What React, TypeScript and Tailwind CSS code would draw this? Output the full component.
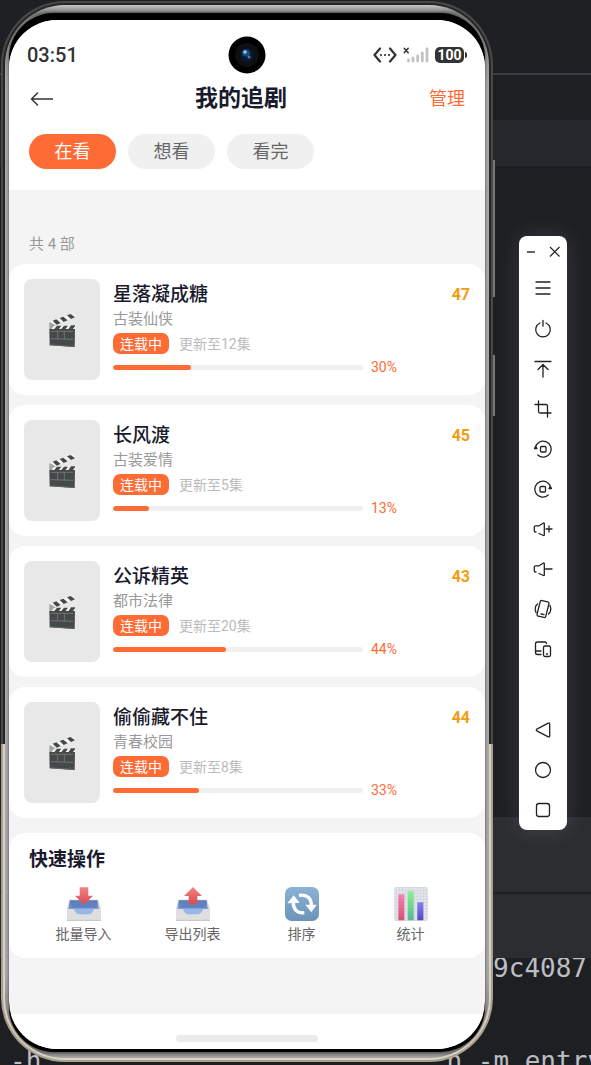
import type { ReactNode } from "react";

const dramas = [
  { title: "星落凝成糖", genre: "古装仙侠", update: "更新至12集", progress: 30, score: 47 },
  { title: "长风渡", genre: "古装爱情", update: "更新至5集", progress: 13, score: 45 },
  { title: "公诉精英", genre: "都市法律", update: "更新至20集", progress: 44, score: 43 },
  { title: "偷偷藏不住", genre: "青春校园", update: "更新至8集", progress: 33, score: 44 },
];

const Clapper = () => (
  <svg viewBox="0 0 78 102" className="w-[26px] h-[34px]" aria-hidden="true">
    <path d="M1 27L74 0l5 13L8 40z" fill="#f4f4f4" />
    <path d="M11 23l11-4 13 11-12 5zM32 15l11-4 13 11-12 5zM54 7l11-4 13 10-12 5z" fill="#454848" />
    <path d="M1 27l9 4 12 9-4 9H1z" fill="#a2a4a4" />
    <path d="M14 39l64-2v13H6z" fill="#f4f4f4" />
    <path d="M24 38h13l-9 12H14zM45 38h12l-9 12H35zM66 37h12v3l-8 10H57z" fill="#454848" />
    <path d="M1 48h77l-1 54-75-5z" fill="#464949" />
    <path d="M5 55h68M5 77l67 2M26 55v22M46 55v23" stroke="#858888" strokeWidth="2" fill="none" />
    <path d="M2 94l75 5v3l-75-5z" fill="#636666" />
  </svg>
);

const Tray = ({ arrow }: { arrow: string }) => (
  <svg viewBox="0 0 102 102" className="w-[34px] h-[34px]" aria-hidden="true">
    <defs>
      <linearGradient id="tray" x1="0" y1="0" x2="0" y2="1">
        <stop offset="0" stopColor="#5572b4" />
        <stop offset="1" stopColor="#809fd5" />
      </linearGradient>
      <linearGradient id="arrow" x1="0" y1="0" x2="0" y2="1">
        <stop offset="0" stopColor="#f08385" />
        <stop offset="1" stopColor="#dc4a4e" />
      </linearGradient>
    </defs>
    <path d="M6 38h88l8 28v36H0V66z" fill="#dadada" />
    <path d="M9 40h82l5 26H4z" fill="url(#tray)" />
    <path d="M17 42h67l5 20H12z" fill="#6281c0" />
    <path d="M0 66h20c5 13 12 17 20 17h22c9 0 14-5 19-17h21v34H0z" fill="#dfdfdf" />
    <path d="M20 65h62c-5 13-12 17-21 17H40c-8 0-15-4-20-17z" fill="#97b8e7" />
    <path d="M0 98h102v4H0z" fill="#c9c9c9" />
    <path d={arrow} fill="url(#arrow)" />
  </svg>
);

const SortIcon = () => (
  <svg viewBox="0 0 102 102" className="w-[34px] h-[34px]" aria-hidden="true">
    <defs>
      <linearGradient id="sort" x1="0" y1="0" x2="0" y2="1">
        <stop offset="0" stopColor="#8bb3d8" />
        <stop offset="1" stopColor="#6b93ba" />
      </linearGradient>
    </defs>
    <rect width="102" height="102" rx="20" fill="url(#sort)" />
    <g fill="none" stroke="#fff" strokeWidth="10">
      <path d="M58 77C36 80 24 66 25 45" />
      <path d="M42 25c23-3 38 8 37 31" />
    </g>
    <path d="M7 49l19-24 18 22zM61 53h34L79 76z" fill="#fff" />
  </svg>
);

const ChartIcon = () => (
  <svg viewBox="0 0 102 102" className="w-[34px] h-[34px]" aria-hidden="true">
    <defs>
      <linearGradient id="pink" x1="0" y1="0" x2="0" y2="1">
        <stop offset="0" stopColor="#f283b0" />
        <stop offset="1" stopColor="#d84f70" />
      </linearGradient>
      <linearGradient id="green" x1="0" y1="0" x2="0" y2="1">
        <stop offset="0" stopColor="#8df08c" />
        <stop offset="1" stopColor="#57b795" />
      </linearGradient>
      <linearGradient id="violet" x1="0" y1="0" x2="0" y2="1">
        <stop offset="0" stopColor="#8282ee" />
        <stop offset="1" stopColor="#504bbd" />
      </linearGradient>
      <pattern id="cells" width="9" height="9" patternUnits="userSpaceOnUse">
        <path d="M0 0h9v9" fill="none" stroke="#c3c8d6" strokeWidth="2" />
      </pattern>
    </defs>
    <rect width="102" height="102" rx="8" fill="#e2e4ea" />
    <rect width="102" height="102" rx="8" fill="url(#cells)" />
    <path d="M13 22h18v78H13z" fill="url(#pink)" />
    <path d="M41 13h18v87H41z" fill="url(#green)" />
    <path d="M70 46h18v54H70z" fill="url(#violet)" />
  </svg>
);

const actions = [
  { label: "批量导入", icon: <Tray arrow="M38 1h26v25h14L51 53 24 26h14z" /> },
  { label: "导出列表", icon: <Tray arrow="M38 52h26V27h14L51 0 24 27h14z" /> },
  { label: "排序", icon: <SortIcon /> },
  { label: "统计", icon: <ChartIcon /> },
];

const speaker =
  "M8 17.500l4.500 2c.4.200.8 0 .8-.5V7.500c0-.5-.4-.7-.8-.5L8 9.800H4.500c-.7 0-1.200.4-1.200 1v4c0 .8.5 1.200 1.200 1.200h.5";

const tools: { name: string; icon: ReactNode }[] = [
  { name: "Menu", icon: <path d="M5 6h14M5 12h14M5 18h14" /> },
  { name: "Power", icon: <path d="M9 7a7.300 7.300 0 1 0 6 0M12 4.500V10" /> },
  { name: "Swipe up", icon: <path d="M4 5.500h16M12 9v12M7 13.500l5-5 5 5" /> },
  { name: "Screenshot", icon: <path d="M7.500 5v10.500c0 1 .5 1.500 1.500 1.500h11M4 8.500h11c1 0 1.500.5 1.500 1.500v11" /> },
  {
    name: "Rotate left",
    icon: (
      <>
        <path d="M4.300 12a8 8 0 1 1 2.500 7" />
        <path d="M3.500 12.500l1.200-2 1.300 2z" fill="#222" />
        <rect x="9.500" y="10.500" width="5.500" height="5.500" rx="1" />
      </>
    ),
  },
  {
    name: "Rotate right",
    icon: (
      <>
        <path d="M19.700 12a8 8 0 1 0-2.500 7" />
        <path d="M18 12.500l1.300-2 1.200 2z" fill="#222" />
        <rect x="9" y="10.500" width="5.500" height="5.500" rx="1" />
      </>
    ),
  },
  { name: "Volume up", icon: <path d={speaker + "M15 13h6M18 10v6"} /> },
  { name: "Volume down", icon: <path d={speaker + "M14.500 13H21"} /> },
  {
    name: "Shake",
    icon: (
      <>
        <rect x="7.500" y="5" width="9" height="16" rx="1.500" transform="rotate(14 12 13)" />
        <path d="M10 18l3 .7M6.500 8c-3 2.500-2.500 6-1.500 8.500M17.500 18c3-2.500 2.500-6 1.500-8.500" />
      </>
    ),
  },
  {
    name: "Devices",
    icon: (
      <>
        <path d="M15.500 7.500C15.500 6.500 15 6 14 6H6.500C5.200 6 4.500 6.700 4.500 8v8.500c0 1.200.7 2 2 2H10M4.500 15H10" />
        <rect x="12.500" y="10" width="7" height="10.500" rx="1.500" />
        <path d="M15.500 18h1" />
      </>
    ),
  },
];

const navTools: { name: string; icon: ReactNode }[] = [
  { name: "Back", icon: <path d="M5.800 11.200l11.500-6c.8-.4 1.400 0 1.400.8v12c0 .8-.6 1.200-1.400.8l-11.500-6c-.7-.4-.7-1.200 0-1.600z" /> },
  { name: "Home", icon: <circle cx="12" cy="12" r="7.500" /> },
  { name: "Recent", icon: <rect x="5.500" y="5.500" width="13" height="13" rx="2.500" /> },
];

const ToolButton = ({ name, children }: { name: string; children: ReactNode }) => (
  <button type="button" aria-label={name} className="flex h-10 w-full items-center justify-center">
    <svg viewBox="0 0 24 24" className="size-6" fill="none" stroke="#222" strokeWidth="1.3" strokeLinecap="round" strokeLinejoin="round">
      {children}
    </svg>
  </button>
);

const EmulatorToolbar = () => (
  <aside className="mt-[236px] w-12 shrink-0 self-start rounded-lg bg-white shadow-[0_0_24px_rgba(255,255,255,0.12)]">
    <div className="flex h-8 items-center justify-between px-1">
      <button type="button" aria-label="Minimize" className="flex size-4 items-center justify-center">
        <svg viewBox="0 0 16 16" className="size-4" stroke="#222" strokeWidth="1.4">
          <path d="M4 8h8" />
        </svg>
      </button>
      <button type="button" aria-label="Close" className="flex size-4 items-center justify-center">
        <svg viewBox="0 0 16 16" className="size-4" stroke="#222" strokeWidth="1.2">
          <path d="M3 3l9.500 9.500M12.500 3L3 12.500" />
        </svg>
      </button>
    </div>
    {tools.map((tool) => (
      <ToolButton key={tool.name} name={tool.name}>
        {tool.icon}
      </ToolButton>
    ))}
    <div className="mt-[42px]">
      {navTools.map((tool) => (
        <ToolButton key={tool.name} name={tool.name}>
          {tool.icon}
        </ToolButton>
      ))}
    </div>
  </aside>
);

// The editor window that lies behind the phone
const Desktop = () => (
  <div className="absolute inset-0 flex flex-col overflow-hidden font-['DejaVu_Sans_Mono',monospace] text-[26px] whitespace-pre text-[#bcbec4]">
    <div className="h-[73px] shrink-0 bg-[#1e2024]" />
    <div className="h-[2px] shrink-0 bg-[#393b40]" />
    <div className="h-[45px] shrink-0" />
    <div className="h-[46px] shrink-0 bg-[#27282d]" />
    <div className="h-[651px] shrink-0" />
    <div className="h-[75px] shrink-0 bg-[#2b2d30]" />
    <div className="h-[2px] shrink-0" />
    <div className="h-[64px] shrink-0 bg-[#2b2d30]" />
    <div className="flex h-[87px] shrink-0 items-start justify-end overflow-hidden pr-1 leading-5">
      <span>9c4087</span>
    </div>
    <div className="flex shrink-0 justify-between pl-[10px] leading-8">
      <span>-h</span>
      <span className="-mr-3">n -m entry</span>
    </div>
  </div>
);

const StatusBar = () => (
  <div className="relative flex h-[38px] items-center justify-between px-[18px]">
    <span className="text-xl font-medium text-[#333]">03:51</span>
    <svg viewBox="0 0 38 38" className="absolute left-1/2 size-[38px] -translate-x-1/2" aria-hidden="true">
      <circle cx="19" cy="19" r="18.500" fill="#000" />
      <circle cx="19" cy="19" r="12" fill="#0d0f12" />
      <circle cx="19" cy="19" r="7" fill="#0a1a2e" />
      <ellipse cx="18" cy="17" rx="4" ry="3.500" fill="#1b4a78" />
      <circle cx="17" cy="16" r="1.800" fill="#8ccbf5" />
      <circle cx="21" cy="21" r="1.500" fill="#3f7fbd" />
    </svg>
    <div className="flex items-center gap-[6px]">
      <svg viewBox="0 0 24 16" className="h-4 w-6" fill="none" stroke="#333" strokeWidth="2.200" strokeLinecap="round" strokeLinejoin="round" aria-hidden="true">
        <path d="M7 1.500L1.500 8 7 14.500M17 1.500L22.500 8 17 14.500M8 8h.01M12 8h.01M16 8h.01" />
      </svg>
      <svg viewBox="0 0 26 16" className="h-4 w-[26px]" fill="none" strokeLinecap="round" aria-hidden="true">
        <path d="M1.200 1.200l4 4.500M5.200 1.200l-4 4.500" stroke="#333" strokeWidth="1.500" />
        <path d="M5.500 13v1M10 11v3M14.700 9v5M19.300 6v8M24 2v12" stroke="#c2c2c2" strokeWidth="2.800" />
      </svg>
      <div className="flex items-center gap-px">
        <span className="flex h-4 w-[29px] items-center justify-center rounded-[5px] bg-[#333] text-sm font-bold text-white">
          100
        </span>
        <span className="h-[6px] w-[2px] rounded-r-full bg-[#333]" />
      </div>
    </div>
  </div>
);

const DramaCard = ({ drama }: { drama: (typeof dramas)[number] }) => (
  <li className="flex gap-[13px] rounded-2xl bg-white p-[15px]">
    <div className="flex h-[101px] w-[76px] shrink-0 items-center justify-center rounded-lg bg-[#e8e8e8]">
      <Clapper />
    </div>
    <div className="min-w-0 flex-1">
      <h2 className="text-[19px] leading-8 font-medium text-[#1a1a2e]">{drama.title}</h2>
      <p className="text-[15px] leading-4 text-[#999]">{drama.genre}</p>
      <div className="mt-[6px] flex h-[21px] items-center gap-[10px] text-sm">
        <span className="flex h-full items-center rounded-[7px] bg-[#ff6b35] px-[7px] text-white">连载中</span>
        <span className="text-[#bbb]">{drama.update}</span>
      </div>
      <div className="mt-[3px] flex h-5 items-center gap-2">
        <div className="h-[5px] flex-1 overflow-hidden rounded-full bg-[#f0f0f0]">
          <div className="h-full rounded-full bg-[#ff6b35]" style={{ width: `calc(${drama.progress}% + 3px)` }} />
        </div>
        <span className="w-[27px] text-sm text-[#ff6b35]">{drama.progress}%</span>
      </div>
    </div>
    <span className="-ml-[13px] w-[72px] shrink-0 text-right text-base leading-8 font-bold text-[#f39c12]">
      {drama.score}
    </span>
  </li>
);

const Screen = () => (
  <main className="overflow-hidden rounded-[48px] bg-[#f4f4f4] font-[Roboto,'Noto_Sans_CJK_SC',sans-serif]">
    <div className="bg-white pt-4">
      <StatusBar />
      <header className="mt-[9px] flex h-8 items-center justify-between px-5">
        <button type="button" aria-label="返回">
          <svg viewBox="0 0 24 16" className="h-4 w-6" fill="none" stroke="#333" strokeWidth="1.500" strokeLinecap="round" strokeLinejoin="round">
            <path d="M8.500 2L2.500 8l6 6M2.500 8H24" />
          </svg>
        </button>
        <h1 className="text-[23px] leading-8 font-bold text-[#1a1a2e]">我的追剧</h1>
        <button type="button" className="text-lg text-[#ff6b35]">
          管理
        </button>
      </header>
      <nav className="mt-[19px] flex gap-3 px-5 pb-[21px] text-lg">
        <button type="button" className="h-[35px] w-[87px] rounded-full bg-[#ff6b35] text-white">
          在看
        </button>
        <button type="button" className="h-[35px] w-[87px] rounded-full bg-[#f0f0f0] text-[#666]">
          想看
        </button>
        <button type="button" className="h-[35px] w-[87px] rounded-full bg-[#f0f0f0] text-[#666]">
          看完
        </button>
      </nav>
    </div>

    <p className="px-5 pt-[42px] pb-2 text-[15px] leading-6 text-[#999]">共 4 部</p>

    <ul className="flex flex-col gap-[10px]">
      {dramas.map((drama) => (
        <DramaCard key={drama.title} drama={drama} />
      ))}
    </ul>

    <section className="mt-[15px] mb-14 rounded-2xl bg-white px-5 pt-[13px] pb-[14px]">
      <h2 className="text-[19px] leading-7 font-bold text-[#1a1a2e]">快速操作</h2>
      <div className="mt-[13px] grid grid-cols-4">
        {actions.map((action) => (
          <button key={action.label} type="button" className="flex flex-col items-center gap-[3px]">
            {action.icon}
            <span className="text-sm leading-5 text-[#666]">{action.label}</span>
          </button>
        ))}
      </div>
    </section>

    <div className="bg-white pt-[21px] pb-[7px]">
      <div className="mx-auto h-[7px] w-[142px] rounded-full bg-[#ebebeb]" />
    </div>
  </main>
);

const App = () => {
  return (
    <div className="relative min-h-screen overflow-hidden bg-[#1e1f22]">
      <Desktop />
      <div className="relative flex gap-[26px] pr-6 pl-px">
        <div className="relative min-w-0 flex-1 pt-px">
          <span className="absolute top-[160px] -right-[2px] h-[137px] w-[2px] bg-[#77787a]" />
          <span className="absolute top-[355px] -right-[2px] h-[61px] w-[2px] bg-[#77787a]" />
          {/* metal rim, dark groove, chrome edge, black bezel */}
          <div className="rounded-[64px] bg-[linear-gradient(to_bottom,#484848_0,#484848_743px,#a89f8f_743px)] p-[2px]">
            <div className="rounded-[62px] bg-[linear-gradient(to_bottom,#252525_0,#252525_741px,#d8d2c4_741px)] p-[2px]">
              <div className="rounded-[60px] bg-[linear-gradient(to_bottom,#c8c8c8_0,#777_8px,#a8a8a8_80px,#a8a8a8_970px,#777_1048px,#c8c8c8_1056px)] px-1 pt-2 pb-[6px]">
                <div className="rounded-[45px] bg-black pt-[7px] pb-[3px] shadow-[0_0_3px_rgba(0,0,0,0.6)]">
                  <Screen />
                </div>
              </div>
            </div>
          </div>
        </div>
        <EmulatorToolbar />
      </div>
    </div>
  );
};

export default App;
